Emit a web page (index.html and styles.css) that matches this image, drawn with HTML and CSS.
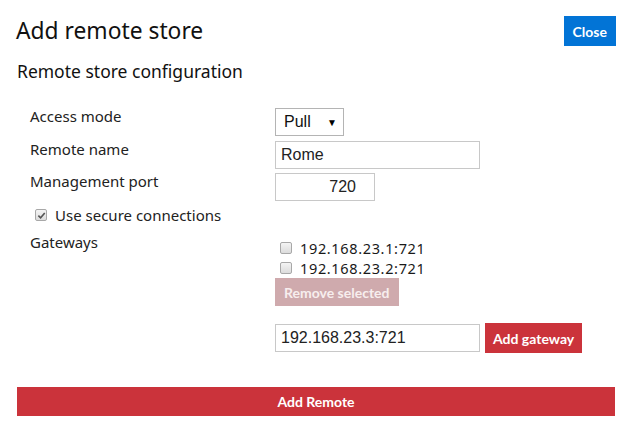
FILE: index.html
```html
<!DOCTYPE html>
<html lang="en">
<head>
<meta charset="utf-8">
<title>Add remote store</title>
<link rel="stylesheet" href="styles.css">
</head>
<body>
<div class="page">
  <header class="head">
    <h1 class="title">Add remote store</h1>
    <button class="btn btn-blue" type="button">Close</button>
  </header>
  <h2 class="subtitle">Remote store configuration</h2>
  <form class="form">
    <div class="row">
      <label class="lbl">Access mode</label>
      <div class="select" role="combobox"><span class="select-val">Pull</span><span class="select-arrow">&#9660;</span></div>
    </div>
    <div class="row row-b">
      <label class="lbl">Remote name</label>
      <input class="inp inp-name" type="text" value="Rome">
    </div>
    <div class="row row-c">
      <label class="lbl">Management port</label>
      <input class="inp inp-port" type="text" value="720">
    </div>
    <label class="secure">
      <span class="cb cb-on"><svg viewBox="0 0 10 10" width="9" height="9"><path d="M1.5 5.2 L4 7.6 L8.6 2.2" fill="none" stroke="#555" stroke-width="1.8"/></svg></span>
      <span>Use secure connections</span>
    </label>
    <div class="row row-g">
      <label class="lbl">Gateways</label>
      <div class="gw">
        <label class="gw-item"><span class="cb"></span><span>192.168.23.1:721</span></label>
        <label class="gw-item"><span class="cb"></span><span>192.168.23.2:721</span></label>
        <div class="gw-remove"><button class="btn btn-dis" type="button">Remove selected</button></div>
        <div class="gw-add">
          <input class="inp inp-name" type="text" value="192.168.23.3:721">
          <button class="btn btn-red btn-add" type="button">Add gateway</button>
        </div>
      </div>
    </div>
  </form>
  <button class="btn btn-red btn-wide" type="button">Add Remote</button>
</div>
</body>
</html>
```
FILE: styles.css
```css
html, body {
  margin: 0;
  padding: 0;
  background: #ffffff;
}
body {
  font-family: "Noto Sans", "Open Sans", sans-serif;
  color: #222;
}
.page {
  padding: 16px 17px 0 17px;
}
.head {
  display: flex;
  justify-content: space-between;
  align-items: center;
  height: 30px;
}
.title {
  margin: 0 0 0 -1px;
  font-size: 22.8px;
  font-weight: 400;
  line-height: 28px;
  color: #111;
}
.btn {
  font-family: Lato, "Noto Sans", sans-serif;
  font-weight: 700;
  font-size: 14px;
  color: #ffffff;
  border: 0;
  height: 30px;
  padding: 0 9px;
  cursor: pointer;
}
.btn-blue {
  background: #0274d6;
  padding: 0 9px;
  margin-right: -1px;
}
.btn-red {
  background: #cb333b;
}
.btn-add {
  padding: 0 8px;
}
.btn-dis {
  background: #cfaaad;
  color: #f7eeee;
  height: 28px;
  padding: 0 9px;
}
.subtitle {
  margin: 13px 0 0 0;
  font-size: 17.5px;
  font-weight: 400;
  line-height: 24px;
  color: #111;
}
.form {
  margin-top: 25px;
  padding-left: 13px;
}
.row {
  display: flex;
  align-items: flex-start;
}
.row-b {
  margin-top: 5px;
}
.row-c {
  margin-top: 4px;
}
.lbl {
  width: 245px;
  flex: none;
  font-size: 15px;
  line-height: 20px;
  margin-top: -2px;
  color: #222;
}
.select {
  box-sizing: border-box;
  width: 69px;
  height: 28px;
  border: 1px solid #b4b4b4;
  display: flex;
  align-items: center;
  justify-content: space-between;
  padding: 0 6px 0 8px;
  font-family: "Liberation Sans", Arial, sans-serif;
  font-size: 16px;
  color: #111;
}
.select-arrow {
  font-size: 10px;
  color: #000;
}
.inp {
  box-sizing: border-box;
  height: 28px;
  border: 1px solid #c8c8c8;
  padding: 0 5px;
  font-family: "Liberation Sans", Arial, sans-serif;
  font-size: 16px;
  color: #222;
  margin: 0;
  outline: none;
}
.inp-name {
  width: 205px;
}
.inp-port {
  width: 100px;
  text-align: right;
  padding-right: 18px;
}
.secure {
  display: flex;
  align-items: center;
  margin-top: 4px;
  padding-left: 5px;
  height: 20px;
  font-size: 15px;
  line-height: 20px;
  color: #222;
}
.cb {
  box-sizing: border-box;
  width: 12px;
  height: 12px;
  border: 1px solid #a8a8a8;
  border-radius: 2px;
  background: linear-gradient(#f4f4f4, #dcdcdc);
  display: inline-flex;
  align-items: center;
  justify-content: center;
  flex: none;
  margin-right: 8px;
}
.row-g {
  margin-top: 9px;
}
.gw {
  display: flex;
  flex-direction: column;
  padding-top: 4px;
}
.gw-item {
  display: flex;
  align-items: center;
  height: 20px;
  padding-left: 5px;
  font-size: 14.5px;
  letter-spacing: 0.65px;
  color: #1a1a1a;
}
.gw-remove {
  margin-top: 0;
  display: flex;
}
.gw-add {
  margin-top: 17px;
  display: flex;
  align-items: center;
  gap: 5px;
}
.btn-wide {
  display: block;
  width: 100%;
  margin-top: 34px;
  height: 29px;
}
```
